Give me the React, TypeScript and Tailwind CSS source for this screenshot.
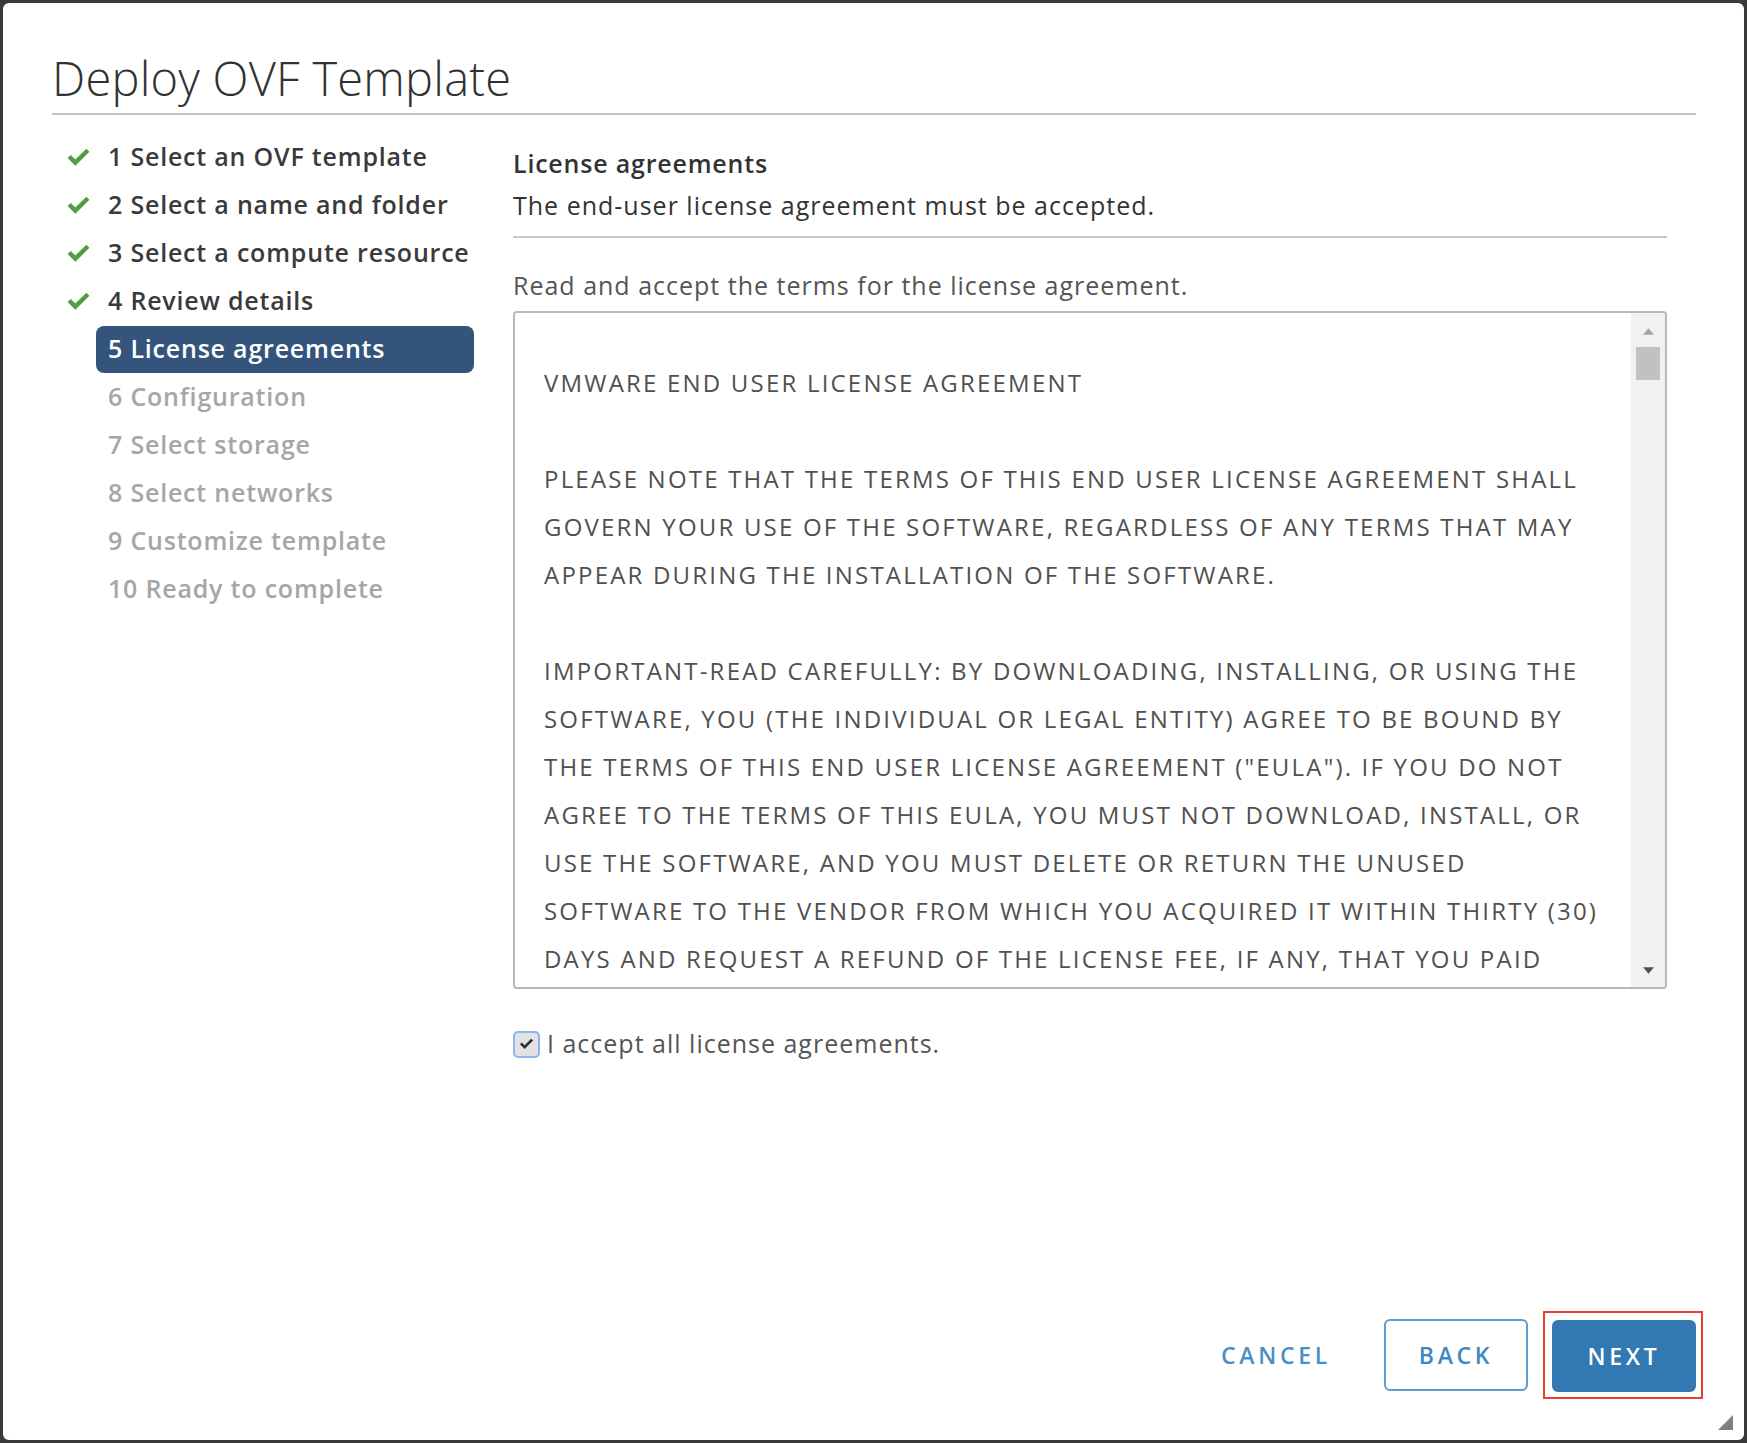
import React from 'react';

interface Step {
  label: string;
  state: 'done' | 'active' | 'todo';
}

const steps: Step[] = [
  { label: '1 Select an OVF template', state: 'done' },
  { label: '2 Select a name and folder', state: 'done' },
  { label: '3 Select a compute resource', state: 'done' },
  { label: '4 Review details', state: 'done' },
  { label: '5 License agreements', state: 'active' },
  { label: '6 Configuration', state: 'todo' },
  { label: '7 Select storage', state: 'todo' },
  { label: '8 Select networks', state: 'todo' },
  { label: '9 Customize template', state: 'todo' },
  { label: '10 Ready to complete', state: 'todo' },
];

// empty strings render as blank lines between paragraphs
const eulaLines = [
  'VMWARE END USER LICENSE AGREEMENT',
  '',
  'PLEASE NOTE THAT THE TERMS OF THIS END USER LICENSE AGREEMENT SHALL',
  'GOVERN YOUR USE OF THE SOFTWARE, REGARDLESS OF ANY TERMS THAT MAY',
  'APPEAR DURING THE INSTALLATION OF THE SOFTWARE.',
  '',
  'IMPORTANT-READ CAREFULLY: BY DOWNLOADING, INSTALLING, OR USING THE',
  'SOFTWARE, YOU (THE INDIVIDUAL OR LEGAL ENTITY) AGREE TO BE BOUND BY',
  'THE TERMS OF THIS END USER LICENSE AGREEMENT ("EULA"). IF YOU DO NOT',
  'AGREE TO THE TERMS OF THIS EULA, YOU MUST NOT DOWNLOAD, INSTALL, OR',
  'USE THE SOFTWARE, AND YOU MUST DELETE OR RETURN THE UNUSED',
  'SOFTWARE TO THE VENDOR FROM WHICH YOU ACQUIRED IT WITHIN THIRTY (30)',
  'DAYS AND REQUEST A REFUND OF THE LICENSE FEE, IF ANY, THAT YOU PAID',
];

const font = { fontFamily: '"Open Sans", "Liberation Sans", sans-serif' };

const CheckIcon = () => (
  <svg viewBox="0 0 24 18" className="w-[25px] h-[19px]">
    <path d="M1.5 9.5 L4.5 6.5 L9 11 L19.5 0.5 L22.5 3.5 L9 17 Z" fill="#4ea13c" />
  </svg>
);

const App = () => {
  return (
    <div className="w-[1747px] h-[1443px] bg-[#3a3a3a] p-[3px]" style={font}>
      <div className="relative h-full bg-white rounded-[6px] flex flex-col">
        {/* Header */}
        <div className="ml-[49px] mr-[48px] pt-[45px] pb-[5px] border-b-2 border-[#c4c4c4]">
          <h1 className="text-[47px] leading-[60px] font-light text-[#313131] tracking-[0.005em]">
            Deploy OVF Template
          </h1>
        </div>

        {/* Body */}
        <div className="flex-1 flex pl-[49px] pt-[18px]">
          {/* Steps */}
          <ul className="w-[425px] flex flex-col">
            {steps.map((step) => (
              <li key={step.label} className="flex items-center h-[48px]">
                <div className="w-[44px] pl-[14px] flex items-center">
                  {step.state === 'done' && <CheckIcon />}
                </div>
                <div
                  className={
                    step.state === 'active'
                      ? 'w-[378px] h-[47px] flex items-center pl-[12px] rounded-[8px] bg-[#34547c] text-white text-[25px] tracking-[0.8px] font-semibold'
                      : step.state === 'done'
                        ? 'w-[378px] h-[47px] flex items-center pl-[12px] text-[#3a3a3a] text-[25px] tracking-[0.8px] font-semibold'
                        : 'w-[378px] h-[47px] flex items-center pl-[12px] text-[#a6a6a6] text-[25px] tracking-[0.8px] font-semibold'
                  }
                >
                  {step.label}
                </div>
              </li>
            ))}
          </ul>

          {/* Page content */}
          <div className="ml-[36px] w-[1154px] flex flex-col">
            <h2 className="text-[25px] leading-[32px] tracking-[0.8px] font-semibold text-[#333] mt-[14px]">
              License agreements
            </h2>
            <p className="text-[25px] leading-[32px] tracking-[1px] text-[#333] mt-[10px]">
              The end-user license agreement must be accepted.
            </p>
            <div className="mt-[15px] border-b-2 border-[#c8c8c8]" />
            <p className="text-[25px] leading-[32px] tracking-[1px] text-[#555] mt-[31px]">
              Read and accept the terms for the license agreement.
            </p>

            {/* EULA text box */}
            <div className="mt-[10px] h-[678px] border-2 border-[#b8b8b8] rounded-[4px] flex overflow-hidden">
              <div className="flex-1 pl-[29px] pt-[46px] overflow-hidden text-[#505050] text-[24px] tracking-[2.2px] leading-[48px]">
                {eulaLines.map((line, i) => (
                  <div key={i} className="h-[48px] whitespace-nowrap">
                    {line}
                  </div>
                ))}
              </div>
              {/* Scrollbar */}
              <div className="w-[34px] bg-[#f1f1f1] flex flex-col items-center">
                <div className="h-[32px] flex items-center justify-center pt-[4px]">
                  <svg viewBox="0 0 10 6" className="w-[11px] h-[7px]">
                    <path d="M0 6 L5 0 L10 6 Z" fill="#a3a3a3" />
                  </svg>
                </div>
                <div className="mt-[2px] w-[24px] h-[33px] bg-[#c1c1c1]" />
                <div className="flex-1" />
                <div className="h-[32px] flex items-center justify-center pb-[2px]">
                  <svg viewBox="0 0 10 6" className="w-[11px] h-[7px]">
                    <path d="M0 0 L10 0 L5 6 Z" fill="#505050" />
                  </svg>
                </div>
              </div>
            </div>

            {/* Accept checkbox */}
            <label className="mt-[39px] flex items-center h-[32px]">
              <span className="w-[27px] h-[27px] rounded-[5px] border-2 border-[#8fb5ee] bg-[#e2e2e2] flex items-center justify-center">
                <svg viewBox="0 0 24 18" className="w-[15px] h-[12px]">
                  <path d="M1.5 9.5 L4.5 6.5 L9 11 L19.5 0.5 L22.5 3.5 L9 17 Z" fill="#2f2f2f" />
                </svg>
              </span>
              <span className="ml-[7px] text-[25px] tracking-[1px] text-[#555]">I accept all license agreements.</span>
            </label>
          </div>
        </div>

        {/* Footer buttons */}
        <div className="flex items-center justify-end pr-[41px] pb-[41px]">
          <button className="w-[144px] h-[72px] text-[23px] font-semibold tracking-[0.16em] text-[#4a8fc7]">
            CANCEL
          </button>
          <button className="ml-[36px] w-[144px] h-[72px] rounded-[6px] border-2 border-[#5d9dd0] text-[23px] font-semibold tracking-[0.16em] text-[#3f87c0]">
            BACK
          </button>
          <div className="ml-[15px] border-2 border-[#e5412d] pl-[7px] pr-[5px] pt-[7px] pb-[5px]">
            <button className="w-[144px] h-[72px] rounded-[6px] bg-[#3278b2] text-white text-[23px] font-semibold tracking-[0.16em]">
              NEXT
            </button>
          </div>
        </div>

        {/* Resize grip */}
        <svg viewBox="0 0 14 14" className="absolute right-[11px] bottom-[10px] w-[15px] h-[15px]">
          <path d="M14 0 L14 14 L0 14 Z" fill="#555" opacity="0.75" />
        </svg>
      </div>
    </div>
  );
};

export default App;
